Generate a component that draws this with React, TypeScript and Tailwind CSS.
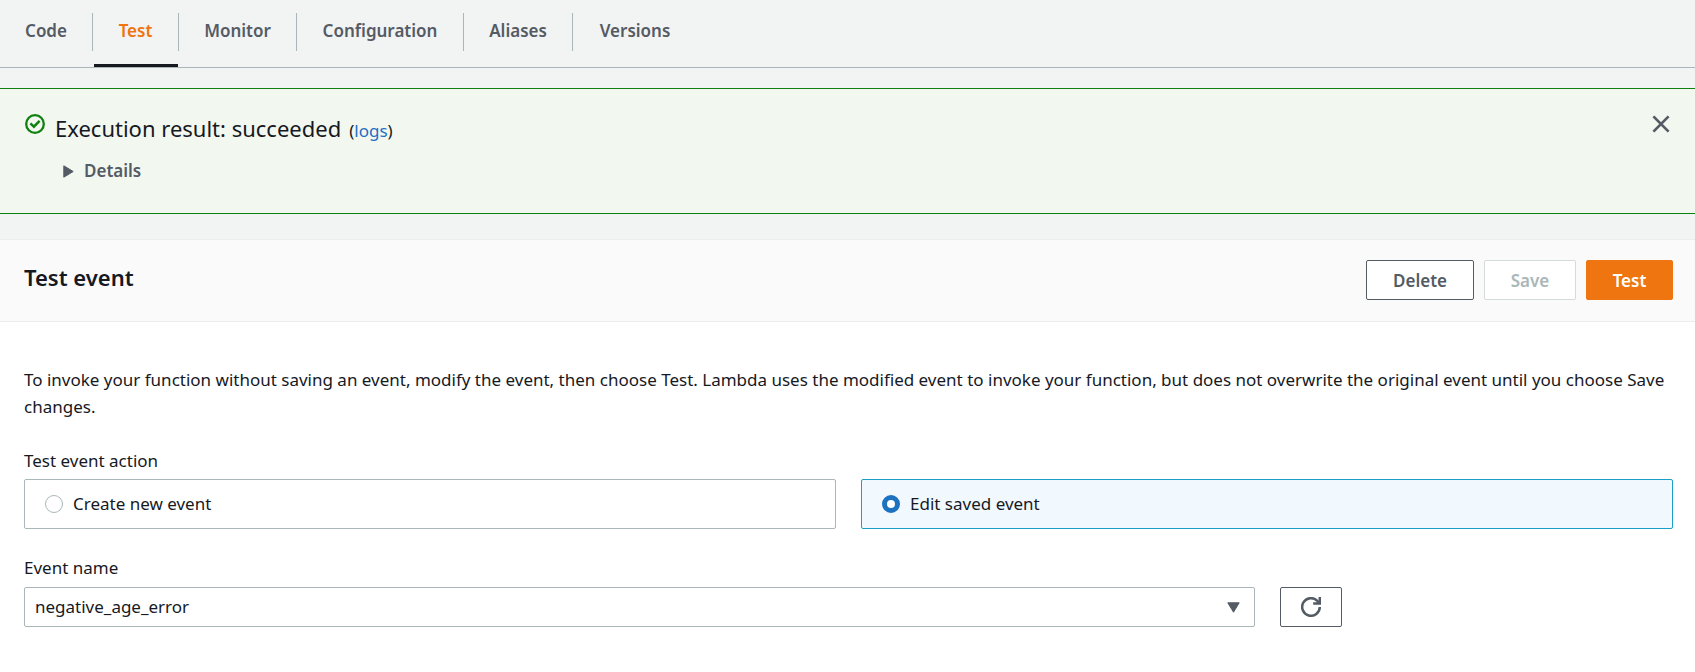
import { useState } from "react";

const TABS = [
  { name: "Code", width: "w-[93px]" },
  { name: "Test", width: "w-[86px]" },
  { name: "Monitor", width: "w-[118px]" },
  { name: "Configuration", width: "w-[167px]" },
  { name: "Aliases", width: "w-[109px]" },
  { name: "Versions", width: "w-[124px]" },
];

function Tabs() {
  return (
    <nav className="flex h-[68px] items-start border-b border-[#aab7b8] pt-[13px]">
      {TABS.map((tab, i) => {
        const active = tab.name === "Test";
        return (
          <a
            key={tab.name}
            href={`#${tab.name.toLowerCase()}`}
            aria-current={active ? "page" : undefined}
            className={`relative flex h-[38px] shrink-0 items-center justify-center pb-[3px] font-semibold ${tab.width} ${
              i < TABS.length - 1 ? "border-r border-[#aab7b8]" : ""
            } ${active ? "text-[#ee7510]" : "text-[#545b64]"}`}
          >
            {tab.name}
            {active && <span className="absolute -bottom-4 left-px right-0 h-[3px] bg-[#16191f]" />}
          </a>
        );
      })}
    </nav>
  );
}

function Banner() {
  return (
    <section className="mt-5 flex h-[126px] items-start border-y border-[#108010] bg-[#f2f7f0] pl-[25px] pr-6">
      <svg className="mt-[25px] size-5 shrink-0" viewBox="0 0 20 20" fill="none" stroke="#108010" strokeWidth="2.3">
        <circle cx="10" cy="10" r="8.8" />
        <path d="M5.4 9.4 8.9 12.7l5.7-5.9" strokeWidth="2.5" />
      </svg>
      <div className="ml-2.5 grow pt-[22px]">
        <h2 className="flex items-baseline gap-2 text-[22px] leading-[34px]">
          Execution result: succeeded
          <span className="text-[17px]">
            (<a href="#logs" className="text-[#1f6fc4]">logs</a>)
          </span>
        </h2>
        <button type="button" className="mt-[9px] flex items-center gap-2.5 pl-2 font-semibold text-[#545b64]">
          <svg className="mt-0.5 h-[13px] w-[11px]" viewBox="0 0 11 13">
            <path d="M.8.8v11.4L10.2 6.5Z" fill="#545b64" stroke="#545b64" strokeWidth="1" strokeLinejoin="round" />
          </svg>
          Details
        </button>
      </div>
      <button type="button" aria-label="Dismiss" className="mt-[25px]">
        <svg className="size-5" viewBox="0 0 20 20" stroke="#545b64" strokeWidth="2.7">
          <path d="M2.4 2.4 17.6 17.6M17.6 2.4 2.4 17.6" />
        </svg>
      </button>
    </section>
  );
}

function Option({
  label,
  checked,
  onSelect,
}: {
  label: string;
  checked: boolean;
  onSelect: () => void;
}) {
  return (
    <label
      className={`flex h-[50px] items-center gap-2.5 rounded-[2px] border pl-5 ${
        checked ? "border-[#1a9fc9] bg-[#f1f9ff]" : "border-[#aab7b8] bg-white"
      }`}
    >
      <input
        type="radio"
        name="action"
        checked={checked}
        onChange={onSelect}
        className="size-[18px] appearance-none rounded-full border border-[#aab7b8] bg-white checked:border-[5px] checked:border-[#1c71c0]"
      />
      <span className="pb-0.5">{label}</span>
    </label>
  );
}

export default function App() {
  const [action, setAction] = useState("edit");
  const button = "h-10 rounded-[2px] border font-semibold";

  return (
    <div className="flex min-h-screen flex-col bg-[#f2f3f3] font-['Noto_Sans',sans-serif] text-[17px] leading-[27px] text-[#16191f]">
      <Tabs />
      <Banner />
      <main className="mt-[25px] grow bg-white">
        <header className="flex h-[83px] items-start border-y border-[#eaeded] bg-[#fafafa] pl-6 pr-[22px] pt-5">
          <h1 className="grow pt-1 text-[22px] font-semibold">Test event</h1>
          <div className="flex gap-2.5">
            <button type="button" className={`${button} w-[108px] border-[#545b64] bg-white text-[#545b64]`}>
              Delete
            </button>
            <button type="button" disabled className={`${button} w-[92px] border-[#d5dbdb] bg-white text-[#aab7b8]`}>
              Save
            </button>
            <button type="button" className={`${button} w-[87px] border-[#ee7510] bg-[#ee7510] text-white`}>
              Test
            </button>
          </div>
        </header>
        <form className="pb-11 pl-6 pr-[22px] pt-11">
          <p>
            To invoke your function without saving an event, modify the event, then choose Test. Lambda uses the
            modified event to invoke your function, but does not overwrite the original event until you choose Save
            changes.
          </p>
          <fieldset className="mt-[27px]">
            <legend className="mb-[5px]">Test event action</legend>
            <div className="grid grid-cols-2 gap-[25px]">
              <Option label="Create new event" checked={action === "create"} onSelect={() => setAction("create")} />
              <Option label="Edit saved event" checked={action === "edit"} onSelect={() => setAction("edit")} />
            </div>
          </fieldset>
          <label htmlFor="event-name" className="mb-[6px] mt-[25px] block">
            Event name
          </label>
          <div className="grid grid-cols-12 gap-[25px]">
            <div className="relative col-span-9">
              <select
                id="event-name"
                className="h-10 w-full appearance-none rounded-[2px] border border-[#aab7b8] bg-white pb-0.5 pl-2.5 pr-12"
              >
                <option>negative_age_error</option>
              </select>
              <svg
                className="pointer-events-none absolute right-[15px] top-[15px] h-[11px] w-[13px]"
                viewBox="0 0 13 11"
              >
                <path d="M.8.8h11.4L6.5 10.2Z" fill="#545b64" stroke="#545b64" strokeWidth="1" strokeLinejoin="round" />
              </svg>
            </div>
            <button
              type="button"
              aria-label="Refresh"
              className="flex h-10 w-[62px] items-center justify-center rounded-[2px] border border-[#545b64]"
            >
              <svg className="size-5" viewBox="0 0 20 20" fill="none" stroke="#545b64" strokeWidth="2.5">
                <path d="M18.8 10A8.8 8.8 0 1 1 16.3 3.8L18.5 6.3" />
                <path d="M18.8 0v6.6H12.2" />
              </svg>
            </button>
          </div>
        </form>
      </main>
    </div>
  );
}
